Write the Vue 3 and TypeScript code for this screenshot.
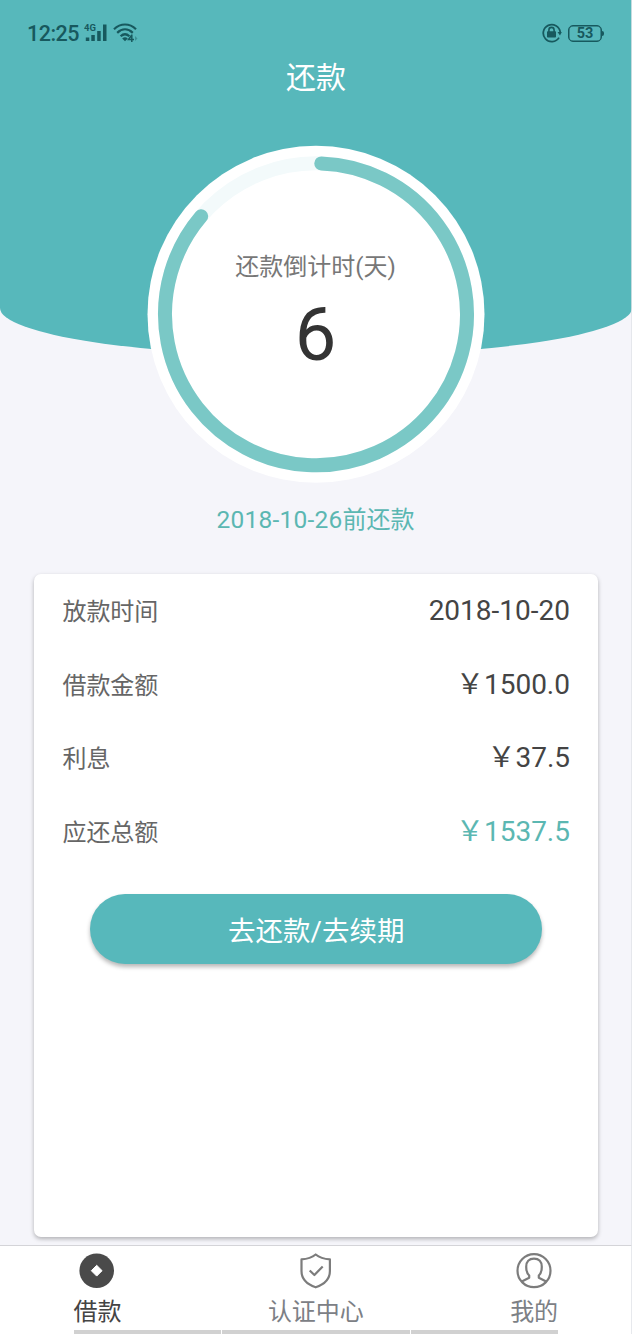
<script setup lang="ts">
interface LoanRow {
  label: string
  value: string
  highlight?: boolean
}

const rows: LoanRow[] = [
  { label: '放款时间', value: '2018-10-20' },
  { label: '借款金额', value: '￥1500.0' },
  { label: '利息', value: '￥37.5' },
  { label: '应还总额', value: '￥1537.5', highlight: true },
]

const centerX = 169
const centerY = 169.3
const radius = 151

function pointAt(degrees: number): string {
  const a = (degrees * Math.PI) / 180
  return `${(centerX + radius * Math.sin(a)).toFixed(2)} ${(centerY - radius * Math.cos(a)).toFixed(2)}`
}

const progress = `M${pointAt(2)} A${radius} ${radius} 0 1 1 ${pointAt(310.5)}`
</script>

<template>
  <div class="screen">
    <header class="hero">
      <div class="status">
        <span class="clock">12:25</span>
        <svg class="signal" width="24" height="20" viewBox="0 0 24 20">
          <text x="0" y="8" class="net">4G</text>
          <path d="M1.8 14.500h3.500V18H1.800z M7.300 12h3.500v6H7.300z M13.200 8h3.500v10h-3.500z M19 1.500h3.500V18H19z" />
        </svg>
        <svg class="wifi" width="26" height="20" viewBox="0 0 26 20">
          <g fill="none" stroke="currentColor" stroke-width="2.2">
            <path d="M1 6.200C7.500-.1 16.500-.1 23 6.200" />
            <path d="M4.200 9.900C9 5.300 15 5.300 19.800 9.900" />
            <path d="M7.600 13.300C10.300 10.800 13.700 10.800 16.400 13.300" />
          </g>
          <path d="M9.200 15.500q2.800-2.300 5.600 0L12 18.300z" />
          <path d="M18.800 11.500v7.500M18.800 12l-3.300 4.600H21" fill="none" stroke="currentColor" stroke-width="1.500" />
          <path d="M22 13l2.500 2.500L22 18z" opacity=".4" />
        </svg>
        <span class="spacer"></span>
        <svg class="lock" width="20" height="20" viewBox="0 0 20 20">
          <path d="M17 14.600A8.500 8.500 0 1 1 18.200 9" fill="none" stroke="currentColor" stroke-width="1.800" />
          <path d="M15.500 9h4.300l-1.800 3.600z" />
          <rect x="5" y="8.300" width="9" height="6.200" rx=".8" />
          <path d="M6.900 9V7a2.600 2.600 0 0 1 5.200 0V9" fill="none" stroke="currentColor" stroke-width="1.600" />
        </svg>
        <span class="battery">53</span>
      </div>
      <h1 class="title">还款</h1>
    </header>

    <section class="dial">
      <svg class="ring" width="337" height="337" viewBox="0 0 337 337">
        <circle :cx="centerX" :cy="centerY" r="168.500" fill="#fff" />
        <circle :cx="centerX" :cy="centerY" :r="radius" fill="none" stroke="#f3fafb" stroke-width="14" />
        <path :d="progress" fill="none" stroke="#7ac8c6" stroke-width="14" stroke-linecap="round" />
      </svg>
      <div class="dial-text">
        <div class="dial-label">还款倒计时(天)</div>
        <div class="dial-days">6</div>
      </div>
    </section>

    <p class="due"><span class="due-date">2018-10-26</span>前还款</p>

    <section class="card">
      <div v-for="row in rows" :key="row.label" class="row">
        <span class="label">{{ row.label }}</span>
        <span class="value" :class="{ highlight: row.highlight }">{{ row.value }}</span>
      </div>
      <button class="pay" type="button">去还款/去续期</button>
    </section>

    <nav class="tabs">
      <div class="tab active">
        <svg width="36" height="36" viewBox="0 0 36 36">
          <circle cx="17.700" cy="17.700" r="17.300" fill="#4a4a4a" />
          <path d="M17.700 12.300l5.400 5.400-5.400 5.400-5.400-5.400z" fill="#fff" stroke="#fff" stroke-width="1" stroke-linejoin="round" />
        </svg>
        <span>借款</span>
      </div>
      <div class="tab">
        <svg width="36" height="36" viewBox="0 0 36 36" fill="none" stroke="#7c7c7c" stroke-width="2.200" stroke-linejoin="round">
          <path d="M17.700 1.500C14 4.500 9 6 3.500 6.400V18c0 8 6 13.500 14.200 16.300C25.900 31.500 31.900 26 31.900 18V6.400C26.400 6 21.400 4.500 17.700 1.500z" />
          <path d="M11.700 17.500l4.700 4.500 8.300-8.500" />
        </svg>
        <span>认证中心</span>
      </div>
      <div class="tab">
        <svg width="36" height="36" viewBox="0 0 36 36" fill="none" stroke="#7c7c7c" stroke-width="2.200" stroke-linejoin="round">
          <circle cx="18" cy="17.700" r="16.500" />
          <path d="M5.800 28.400l7.400-3.700v-2.200C10.700 20.200 10.200 17.200 10.200 13.700c0-5 2.800-8 7.800-8s7.800 3 7.800 8c0 3.500-.5 6.500-3 8.800v2.200l7.400 3.700" />
        </svg>
        <span>我的</span>
      </div>
      <div class="strip"><i></i><i></i><i></i></div>
    </nav>
    <div class="edge"></div>
  </div>
</template>

<style>
body {
  margin: 0;
}
</style>

<style scoped>
.screen {
  position: relative;
  display: flex;
  flex-direction: column;
  width: 632px;
  height: 1334px;
  overflow: hidden;
  background: #f5f5fa;
  font-family: Roboto, "Noto Sans CJK SC", sans-serif;
  color: #444;
}
.hero {
  flex: none;
  height: 356px;
  background: #57b8bb;
  border-radius: 0 0 50% 50% / 0 0 48px 48px;
}
.status {
  display: flex;
  align-items: center;
  box-sizing: border-box;
  height: 66px;
  padding: 0 30px 0 27px;
  color: #17595e;
}
.status svg {
  fill: currentColor;
}
.clock {
  width: 57px;
  padding-top: 1px;
  font-size: 21.500px;
  font-weight: 500;
  line-height: 24px;
  letter-spacing: -0.500px;
}
.signal {
  margin-right: 5px;
}
.net {
  font: 700 9.500px Roboto, sans-serif;
}
.spacer {
  flex: 1;
}
.lock {
  margin-right: 6px;
}
.battery {
  position: relative;
  box-sizing: border-box;
  width: 34px;
  height: 17px;
  border: 1px solid currentColor;
  border-radius: 5px;
  box-shadow: inset 0 0 0 0.500px currentColor;
  font-size: 14.500px;
  font-weight: 700;
  line-height: 16px;
  text-align: center;
}
.battery::after {
  content: "";
  position: absolute;
  top: 5px;
  right: -3px;
  width: 2px;
  height: 5px;
  border-radius: 0 2px 2px 0;
  background: currentColor;
}
.title {
  margin: -10px 0 0;
  font-size: 30px;
  font-weight: 400;
  line-height: 44px;
  text-align: center;
  color: #fff;
}
.dial {
  flex: none;
  display: grid;
  justify-content: center;
  width: 631px;
  height: 337px;
  margin-top: -211px;
}
.ring,
.dial-text {
  grid-area: 1 / 1;
}
.ring {
  display: block;
  overflow: visible;
}
.dial-text {
  position: relative;
  padding-top: 104px;
  text-align: center;
}
.dial-label {
  font-size: 24px;
  line-height: 36px;
  color: #777;
}
.dial-days {
  margin-top: 10px;
  font-size: 74px;
  line-height: 80px;
  color: #333;
}
.due {
  width: 631px;
  margin: 19px 0 0;
  padding-top: 1px;
  font-size: 24px;
  line-height: 36px;
  text-align: center;
  color: #5bb7b2;
}
.due-date {
  font-size: 24.500px;
  letter-spacing: 0.250px;
}
.card {
  flex: none;
  display: flex;
  flex-direction: column;
  box-sizing: border-box;
  width: 564px;
  height: 662.500px;
  margin: 36px 0 0 34px;
  padding: 0 28px 0 28.500px;
  border-radius: 7px;
  background: #fff;
  box-shadow: 0 2px 4px rgba(0, 0, 0, 0.280);
}
.row {
  display: flex;
  align-items: center;
  justify-content: space-between;
  height: 73.700px;
}
.label {
  padding-top: 2px;
  font-size: 24px;
  line-height: 36px;
  letter-spacing: -0.100px;
  color: #666;
}
.value {
  font-size: 28px;
  line-height: 36px;
}
.highlight {
  color: #5bb7b2;
}
.pay {
  align-self: center;
  width: 452px;
  height: 70px;
  margin-top: 25px;
  padding: 5px 0 0;
  border: 0;
  border-radius: 35px;
  background: #57b8bb;
  box-shadow: 0 3px 4px rgba(0, 0, 0, 0.280);
  font-family: inherit;
  font-size: 27.500px;
  line-height: 65px;
  color: #fff;
}
.tabs {
  position: relative;
  display: flex;
  justify-content: space-between;
  box-sizing: border-box;
  height: 89px;
  margin-top: auto;
  padding: 7px 74px 0 73.500px;
  border-top: 1px solid #d4d4d8;
  background: #fff;
}
.tab {
  display: flex;
  flex-direction: column;
  align-items: center;
  font-size: 24px;
  line-height: 36px;
  letter-spacing: -0.100px;
  color: #7c8085;
}
.tab svg {
  display: block;
  margin-bottom: 5px;
}
.active {
  color: #444;
}
.strip {
  position: absolute;
  left: 74px;
  bottom: 0;
  display: grid;
  grid-template-columns: 147px 188px 147px;
  gap: 1px;
  height: 4px;
}
.strip i {
  background: #d1d1d1;
}
.edge {
  position: absolute;
  top: 0;
  right: 0;
  width: 1px;
  height: 100%;
  background: rgba(225, 228, 232, 0.800);
}
</style>
